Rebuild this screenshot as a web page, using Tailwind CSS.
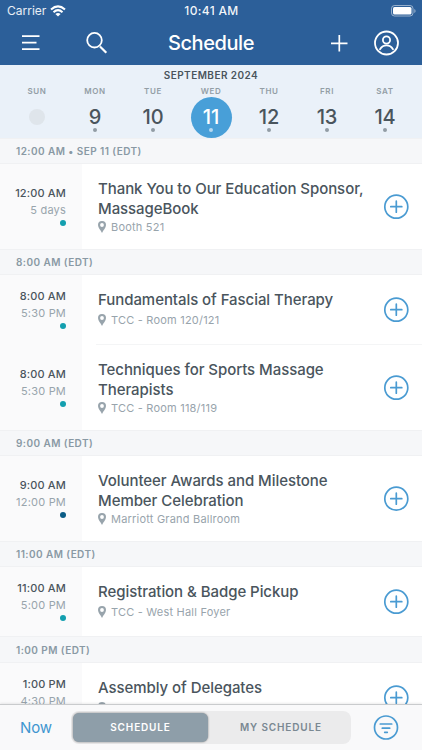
<!DOCTYPE html>
<html lang="en">
<head>
<meta charset="utf-8">
<title>Schedule</title>
<script src="https://cdn.jsdelivr.net/npm/@tailwindcss/browser@4"></script>
</head>
<body class="bg-white">
<svg class="hidden">
  <symbol id="add" viewBox="0 0 26 26"><g fill="none" stroke="#4a9bd2" stroke-width="1.7" stroke-linecap="round"><circle cx="13.300" cy="12.700" r="11.500"/><path d="M13.300 7.200v11M7.800 12.700h11"/></g></symbol>
  <symbol id="pin" viewBox="0 0 8 12"><path fill="#98a4ac" fill-rule="evenodd" d="M4 0a4 4 0 0 0-4 4c0 2.700 2.600 5 4 8 1.400-3 4-5.300 4-8a4 4 0 0 0-4-4zm0 2.100a1.900 1.900 0 1 1 0 3.800 1.900 1.900 0 0 1 0-3.800z"/></symbol>
</svg>
<div class="relative flex h-[750px] w-[422px] flex-col overflow-hidden bg-white font-['Inter',sans-serif] text-[#4a555d]">
  <header class="h-[65px] shrink-0 bg-[#2c5f99] text-white">
    <div class="grid h-[21px] grid-cols-3 items-center pl-[7px] pr-[6px] text-[12px] leading-[21px]">
      <div class="flex items-center gap-[4px] text-white/90"><span>Carrier</span>
        <svg class="h-[12px] w-[16px]" viewBox="0 0 16 12" fill="none" stroke="#fff" stroke-width="2.1"><path d="M1 4.500Q8-1.700 15 4.500M3.500 7.200Q8 3.200 12.500 7.200"/><path d="M8 11.500 5.400 8.900Q8 6.900 10.600 8.900z" fill="#fff" stroke="none"/></svg>
      </div>
      <div class="text-center font-medium tracking-[0.35px] text-white/95">10:41 AM</div>
      <svg class="h-[12px] w-[25px] justify-self-end" viewBox="0 0 25 12"><rect x=".5" y=".5" width="21.500" height="10.500" rx="3" fill="none" stroke="#fff" stroke-opacity=".5"/><rect x="2" y="2" width="18.500" height="7.500" rx="1.500" fill="#fff"/><path d="M23.300 4v4q1.300-.6 1.300-2t-1.300-2" fill="#fff" fill-opacity=".5"/></svg>
    </div>
    <div class="flex h-[44px] items-center">
      <svg class="ml-[22px] h-[16px] w-[18px]" viewBox="0 0 18 16" stroke="#fff" stroke-width="1.700"><path d="M0 1.200h17.500M0 7.700h14.500M0 14.200h17.500"/></svg>
      <svg class="ml-[46px] h-[22px] w-[22px]" viewBox="0 0 22 22" fill="none" stroke="#fff" stroke-width="1.800"><circle cx="8.500" cy="8.200" r="7.300"/><path d="m14 14.500 6.300 6.200" stroke-width="2.200"/></svg>
      <h1 class="ml-[46px] w-[114px] text-center text-[20px] font-medium tracking-[-0.4px]">Schedule</h1>
      <svg class="ml-[63px] h-[17px] w-[17px]" viewBox="0 0 17 17" stroke="#fff" stroke-width="1.700"><path d="M8.300 0v16.500M0 8.300h16.500"/></svg>
      <svg class="ml-[26px] h-[26px] w-[26px]" viewBox="0 0 26 26" fill="none" stroke="#fff" stroke-width="1.800"><circle cx="12.500" cy="13" r="11.500"/><circle cx="12.500" cy="10" r="3.600"/><path d="M6 19.200q2.400-3.800 6.500-3.800t6.500 3.800" stroke-linecap="round"/></svg>
    </div>
  </header>

  <section class="h-[73px] shrink-0 bg-[#eaf1f9]">
    <div class="h-[20px] text-center text-[10px] font-semibold leading-[21px] tracking-[0.45px]">SEPTEMBER 2024</div>
    <div id="days" class="flex px-[8px]"></div>
  </section>
  <main id="list" class="min-h-0 flex-1 overflow-hidden"></main>

  <footer class="flex h-[46px] shrink-0 items-center border-t border-[#c9cbcd] bg-[#f9f9fa] shadow-[0_-1px_2px_rgba(0,0,0,0.08)]">
    <a class="ml-[20px] w-[51px] pt-px text-[15px] tracking-[-0.1px] text-[#4096d0]">Now</a>
    <div class="flex h-[33px] w-[280px] items-center rounded-[8px] bg-[#ebebec] p-[2px] text-[10px] font-semibold tracking-[0.85px]">
      <div class="flex h-[29px] w-[135px] items-center justify-center rounded-[6px] bg-[#8e9ea9] text-white shadow-[0_0_2px_rgba(0,0,0,0.5)]">SCHEDULE</div>
      <div class="flex-1 pl-[5px] text-center text-[#7a8892]">MY SCHEDULE</div>
    </div>
    <svg class="ml-[22px] h-[26px] w-[26px]" viewBox="0 0 26 26" fill="none" stroke="#4a9bd2" stroke-width="1.700" stroke-linecap="round"><circle cx="13" cy="12.500" r="11.500"/><path d="M7.300 9h11.400M9.300 13.200h7.400M11.700 17.300h2.600"/></svg>
  </footer>
</div>
<script>
const days = [['SUN',''],['MON',9],['TUE',10],['WED',11],['THU',12],['FRI',13],['SAT',14]];
document.getElementById('days').innerHTML = days.map(([d, n]) => `
  <div class="flex w-[58px] flex-col items-center">
    <div class="h-[12px] text-[8px] font-semibold leading-[12px] tracking-[0.6px] text-[#939ea6]">${d}</div>
    ${n === '' ? '<div class="mt-[12px] h-[16px] w-[16px] rounded-full bg-[#dfe5eb]"></div>' : `
    <div class="flex h-[41px] w-[41px] flex-col items-center rounded-full ${n === 11 ? 'bg-[#489fd8] text-white' : ''}">
      <div class="mt-[9px] h-[22px] text-[20px] font-medium leading-[23px] tracking-[-0.1px]">${n}</div>
      <div class="h-[4px] w-[4px] rounded-full ${n === 11 ? 'bg-[#b5d8f0]' : 'bg-[#929ca5]'}"></div>
    </div>`}
  </div>`).join('');

const head = (t, h = 'h-[26px] leading-[25px]') => `<div class="${h} border-y border-[#f0f1f3] bg-[#f6f7f9] pl-[16px] text-[10px] font-semibold tracking-[0.44px] text-[#8999a4]">${t}</div>`;
const row = (h, start, end, title, loc, dot = 'bg-[#139faf]', line = '') => {
  const two = title.includes('<br>');
  return `<article class="flex ${h}">
    <div class="flex w-[82px] shrink-0 flex-col items-end bg-[#fafafb] pr-[16px] text-[11px] leading-[17px] tracking-[0.2px] ${two ? 'pt-[21px]' : 'pt-[13px]'}">
      <div class="font-medium tracking-[0.15px] whitespace-nowrap">${start}</div>
      <div class="text-[#98a4ac]">${end}</div>
      <div class="mt-[1px] h-[6px] w-[6px] rounded-full ${dot}"></div>
    </div>
    <div class="ml-[14px] flex min-w-0 flex-1 pl-[2px] ${line}">
      <div class="flex-1 pt-[15px]">
        <h2 class="text-[15px] font-medium leading-[20px] tracking-[-0.06px] whitespace-nowrap">${title}</h2>
        <div class="flex h-[16px] items-center gap-[5px] text-[11px] tracking-[0.21px] text-[#98a4ac] ${two ? '' : 'mt-[2px]'}">
          <svg class="h-[12px] w-[8px]"><use href="#pin"/></svg><span>${loc}</span>
        </div>
      </div>
      <svg class="mr-[13px] h-[26px] w-[26px] shrink-0 self-center"><use href="#add"/></svg>
    </div>
  </article>`;
};
document.getElementById('list').innerHTML =
  head('12:00 AM • SEP 11 (EDT)') +
  row('h-[85px]', '12:00 AM', '5 days', 'Thank You to Our Education Sponsor,<br>MassageBook', 'Booth 521') +
  head('8:00 AM (EDT)') +
  row('h-[70px]', '8:00 AM', '5:30 PM', 'Fundamentals of Fascial Therapy', 'TCC - Room 120/121', 'bg-[#139faf]', 'border-b border-[#f4f5f6]') +
  row('h-[85px]', '8:00 AM', '5:30 PM', 'Techniques for Sports Massage<br>Therapists', 'TCC - Room 118/119') +
  head('9:00 AM (EDT)') +
  row('h-[85px]', '9:00 AM', '12:00 PM', 'Volunteer Awards and Milestone<br>Member Celebration', 'Marriott Grand Ballroom', 'bg-[#0b5c86]') +
  head('11:00 AM (EDT)') +
  row('h-[69px]', '11:00 AM', '5:00 PM', 'Registration &amp; Badge Pickup', 'TCC - West Hall Foyer') +
  head('1:00 PM (EDT)', 'h-[27px] leading-[27px]') +
  row('h-[70px]', '1:00 PM', '4:30 PM', 'Assembly of Delegates', '');
</script>
</body>
</html>
